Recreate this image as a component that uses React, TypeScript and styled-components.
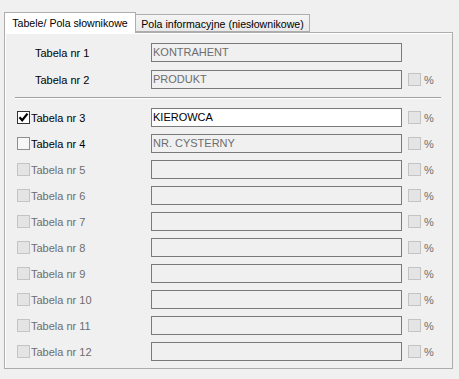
import React from 'react'
import styled, { createGlobalStyle } from 'styled-components'

const GlobalStyle = createGlobalStyle`
  body {
    margin: 0;
    background: #f0f0f0;
    font-family: "Liberation Sans", Arial, sans-serif;
    font-size: 11px;
    color: #000;
  }
`

const Page = styled.div`
  display: flex;
  flex-direction: column;
  padding: 12px 0 0 4px;
  width: 449px;
`

const TabStrip = styled.div`
  display: flex;
  align-items: flex-end;
  height: 20px;
  position: relative;
  z-index: 1;
`

const Tab = styled.div<{ $active?: boolean }>`
  box-sizing: border-box;
  display: flex;
  align-items: center;
  justify-content: center;
  width: ${({ $active }) => ($active ? '132px' : '174px')};
  height: ${({ $active }) => ($active ? '21px' : '18px')};
  margin-bottom: ${({ $active }) => ($active ? '-1px' : '0')};
  padding-top: ${({ $active }) => ($active ? '0' : '1px')};
  background: ${({ $active }) => ($active ? '#ffffff' : 'linear-gradient(#f4f4f4, #e9e9e9)')};
  border: 1px solid #adadad;
  border-bottom: ${({ $active }) => ($active ? 'none' : '1px solid #adadad')};
  border-left: ${({ $active }) => ($active ? '1px solid #adadad' : 'none')};
  font-size: 10.6px;
  white-space: nowrap;
`

const Panel = styled.div`
  box-sizing: border-box;
  height: 337px;
  border: 1px solid #adadad;
  background: #f0f0f0;
  box-shadow: inset 1px 1px #ffffff;
  padding: 10px 0 0 12px;
  display: flex;
  flex-direction: column;
`

const Group = styled.div<{ $gap: number }>`
  display: flex;
  flex-direction: column;
  gap: ${({ $gap }) => $gap}px;
`

const Separator = styled.div`
  height: 0;
  border-top: 1px solid #a0a0a0;
  border-bottom: 1px solid #ffffff;
  margin: 8px 11px 9px -2px;
`

const Row = styled.div`
  display: flex;
  align-items: center;
  height: 19px;
`

const CheckSlot = styled.div`
  width: 14px;
  display: flex;
  align-items: center;
`

const Box = styled.div<{ $state: 'checked' | 'unchecked' | 'disabled' }>`
  box-sizing: border-box;
  width: 13px;
  height: 13px;
  display: flex;
  align-items: center;
  justify-content: center;
  border: 1px solid
    ${({ $state }) => ($state === 'checked' ? '#333333' : $state === 'unchecked' ? '#8e8f8f' : '#c4c4c4')};
  background: ${({ $state }) => ($state === 'disabled' ? '#e4e4e4' : $state === 'unchecked' ? '#f7f7f7' : '#ffffff')};
`

const Label = styled.div<{ $disabled?: boolean; $indent?: boolean }>`
  width: 120px;
  box-sizing: border-box;
  padding-left: ${({ $indent }) => ($indent ? '4px' : '0')};
  color: ${({ $disabled }) => ($disabled ? '#6d6d6d' : '#000000')};
  white-space: nowrap;
`

const Field = styled.div<{ $enabled?: boolean }>`
  box-sizing: border-box;
  width: 251px;
  height: 19px;
  border: 1px solid #7a7a7a;
  background: ${({ $enabled }) => ($enabled ? '#ffffff' : '#f0f0f0')};
  color: ${({ $enabled }) => ($enabled ? '#000000' : '#6d6d6d')};
  padding-left: 1px;
  line-height: 17px;
  white-space: nowrap;
`

const Percent = styled.div`
  display: flex;
  align-items: center;
  margin-left: 6px;
  gap: 3px;
  color: #6d6d6d;
`

function Check() {
  return (
    <svg width="11" height="11" viewBox="0 0 11 11">
      <path d="M1.5 5.2 L4.2 8.3 L9.5 1.6" fill="none" stroke="#000" strokeWidth="2.2" />
    </svg>
  )
}

interface Table {
  no: number
  value: string
  state: 'checked' | 'unchecked' | 'disabled'
}

const tables: Table[] = [
  { no: 3, value: 'KIEROWCA', state: 'checked' },
  { no: 4, value: 'NR. CYSTERNY', state: 'unchecked' },
  ...[5, 6, 7, 8, 9, 10, 11, 12].map((no) => ({ no, value: '', state: 'disabled' as const }))
]

export default function App() {
  return (
    <Page>
      <GlobalStyle />
      <TabStrip>
        <Tab $active>Tabele/ Pola słownikowe</Tab>
        <Tab>Pola informacyjne (niesłownikowe)</Tab>
      </TabStrip>
      <Panel>
        <Group $gap={8}>
          <Row>
            <CheckSlot />
            <Label $indent>Tabela nr 1</Label>
            <Field>KONTRAHENT</Field>
          </Row>
          <Row>
            <CheckSlot />
            <Label $indent>Tabela nr 2</Label>
            <Field>PRODUKT</Field>
            <Percent>
              <Box $state="disabled" />%
            </Percent>
          </Row>
        </Group>
        <Separator />
        <Group $gap={7}>
          {tables.map((t) => (
            <Row key={t.no}>
              <CheckSlot>
                <Box $state={t.state}>{t.state === 'checked' && <Check />}</Box>
              </CheckSlot>
              <Label $disabled={t.state === 'disabled'}>Tabela nr {t.no}</Label>
              <Field $enabled={t.state === 'checked'}>{t.value}</Field>
              <Percent>
                <Box $state="disabled" />%
              </Percent>
            </Row>
          ))}
        </Group>
      </Panel>
    </Page>
  )
}
